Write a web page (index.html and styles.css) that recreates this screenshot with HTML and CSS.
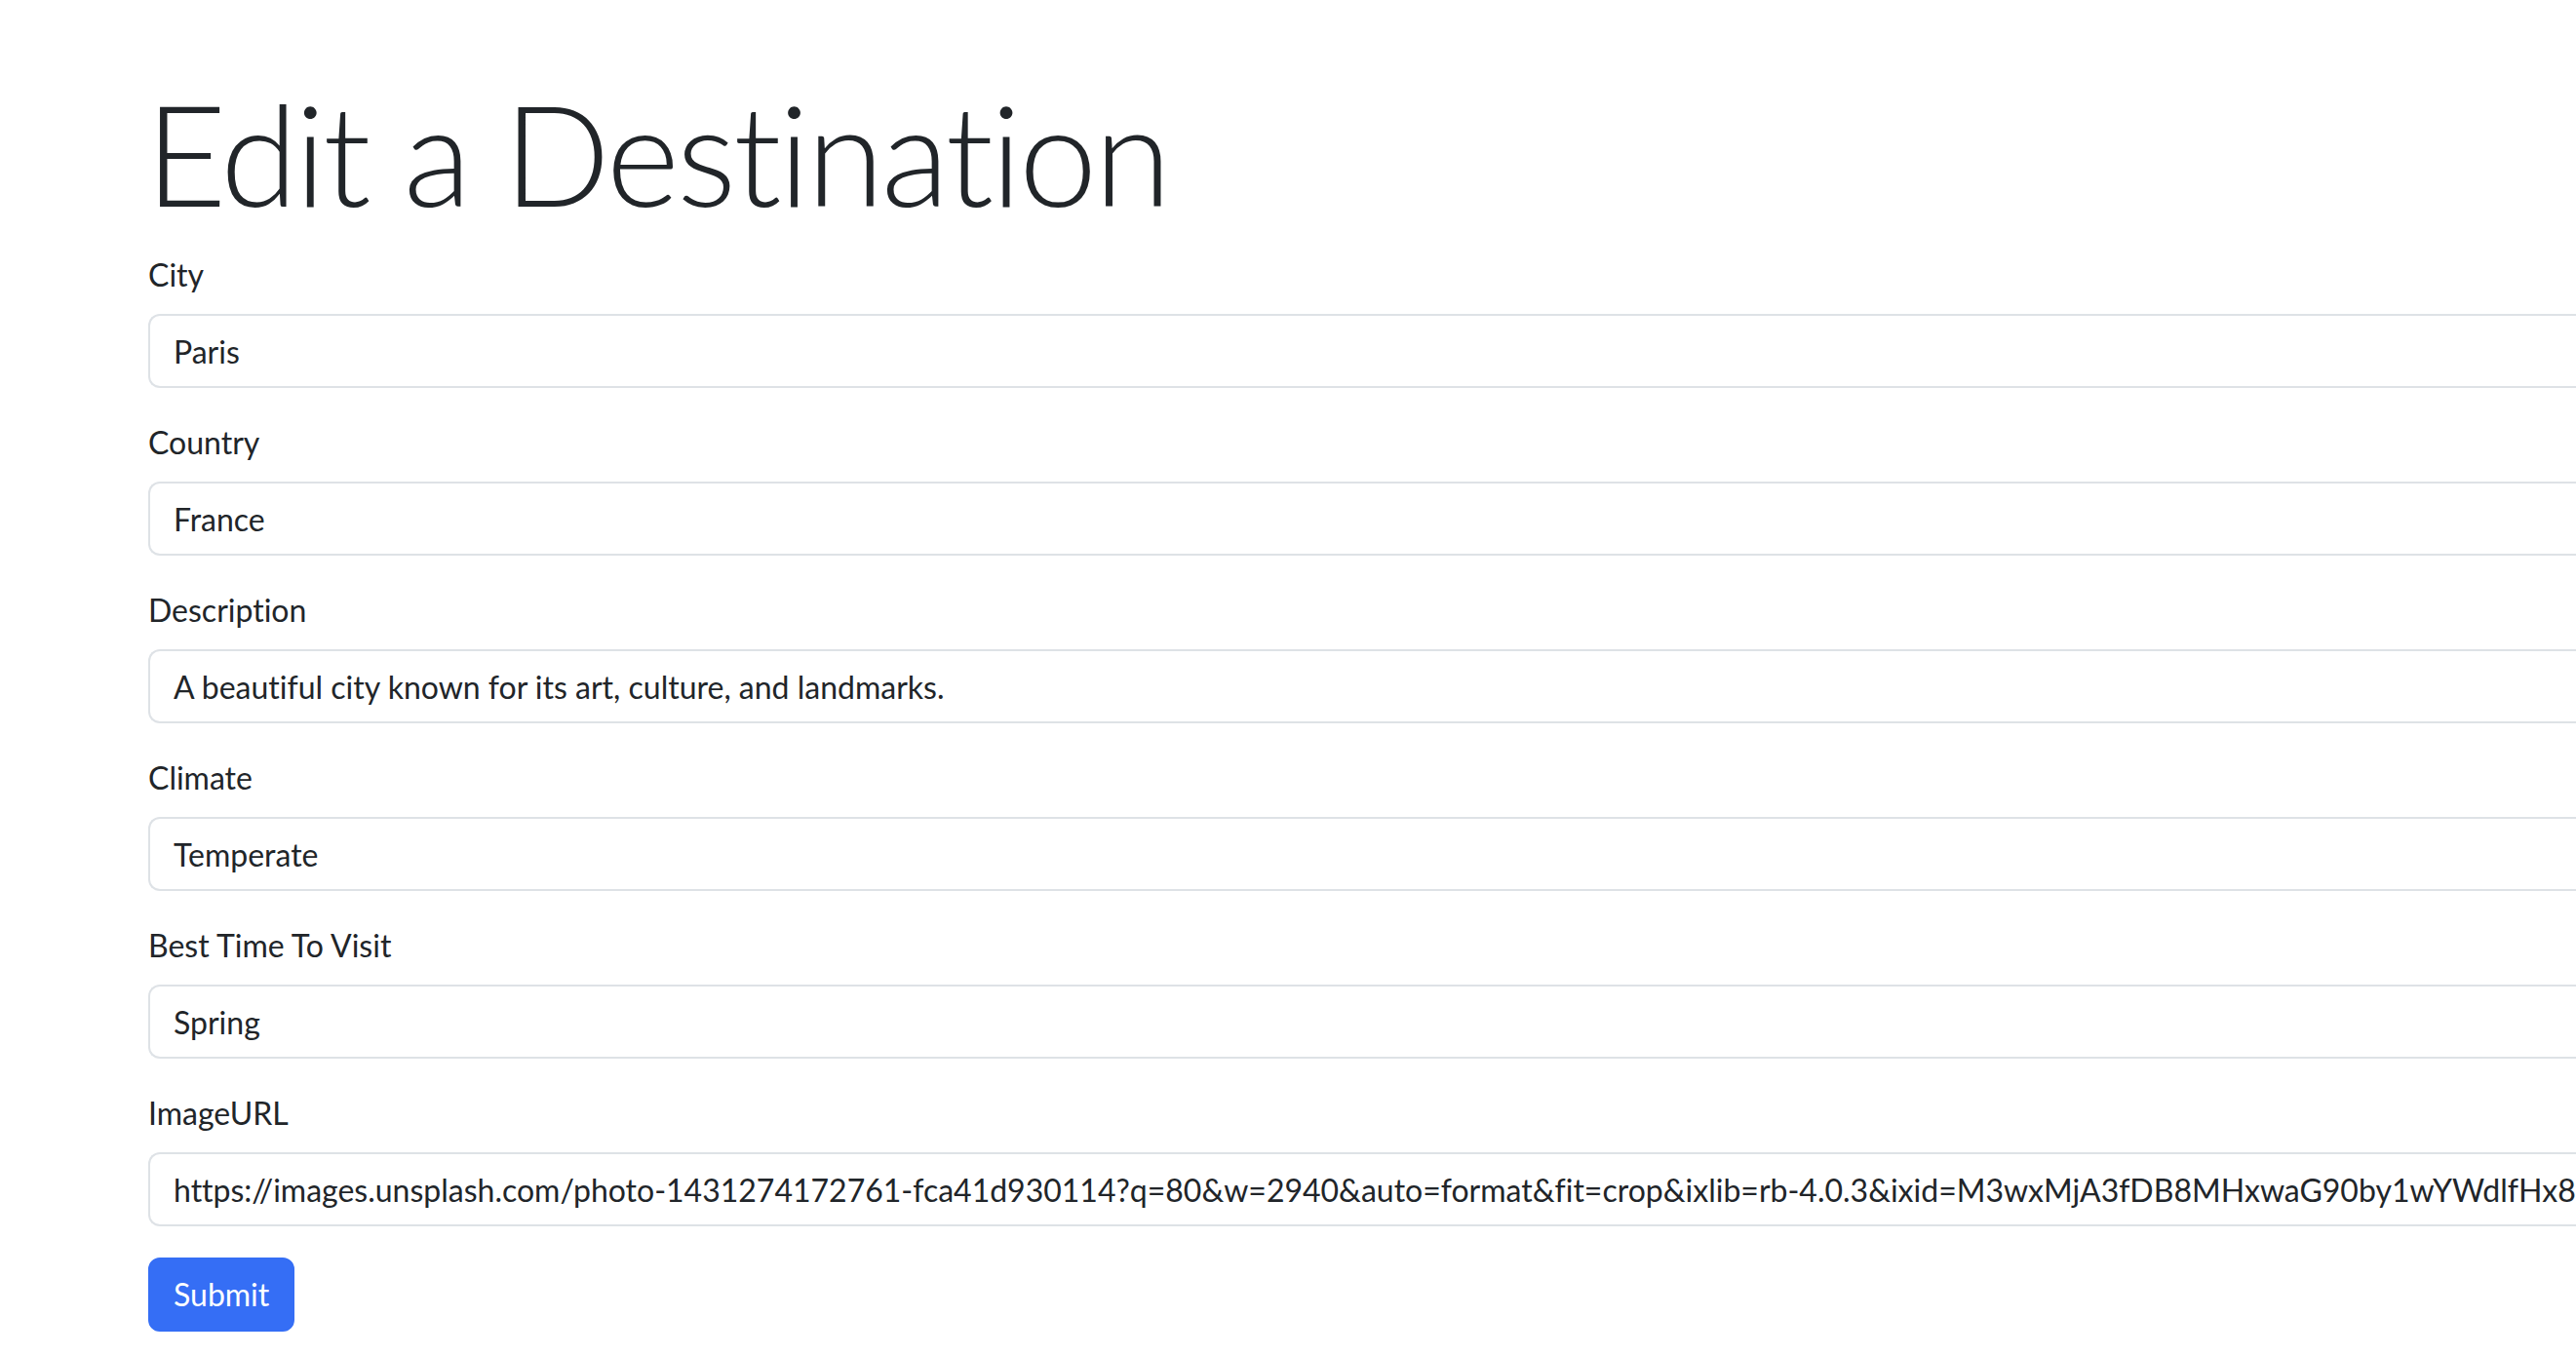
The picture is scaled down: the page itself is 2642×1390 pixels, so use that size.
FILE: index.html
```html
<!DOCTYPE html>
<html lang="en">
<head>
<meta charset="utf-8">
<title>Edit a Destination</title>
<link rel="stylesheet" href="styles.css">
</head>
<body>
<main class="page">
  <h1 class="title">Edit a Destination</h1>
  <form class="form">
    <div class="group">
      <label class="label" for="city">City</label>
      <input class="control" id="city" type="text" value="Paris">
    </div>
    <div class="group">
      <label class="label" for="country">Country</label>
      <input class="control" id="country" type="text" value="France">
    </div>
    <div class="group">
      <label class="label" for="description">Description</label>
      <input class="control" id="description" type="text" value="A beautiful city known for its art, culture, and landmarks.">
    </div>
    <div class="group">
      <label class="label" for="climate">Climate</label>
      <input class="control" id="climate" type="text" value="Temperate">
    </div>
    <div class="group">
      <label class="label" for="besttime">Best Time To Visit</label>
      <input class="control" id="besttime" type="text" value="Spring">
    </div>
    <div class="group">
      <label class="label" for="imageurl">ImageURL</label>
      <input class="control" id="imageurl" type="text" value="https://images.unsplash.com/photo-1431274172761-fca41d930114?q=80&amp;w=2940&amp;auto=format&amp;fit=crop&amp;ixlib=rb-4.0.3&amp;ixid=M3wxMjA3fDB8MHxwaG90by1wYWdlfHx8fGVufDB8fHx8fA%3D%3D">
    </div>
    <button class="submit" type="submit">Submit</button>
  </form>
</main>
</body>
</html>
```
FILE: styles.css
```css
html, body {
  margin: 0;
  padding: 0;
  overflow: hidden;
  background: #ffffff;
}

body {
  font-family: Lato, "Liberation Sans", sans-serif;
  font-size: 32px;
  line-height: 48px;
  color: #212529;
  font-variant-ligatures: none;
}

.page {
  padding: 71px 0 0 152px;
}

.title {
  margin: 0 0 15px -3px;
  font-size: 144px;
  line-height: 172px;
  font-weight: 300;
  letter-spacing: -3px;
  color: #212529;
}

.form {
  margin: 0;
}

.group {
  margin-bottom: 32px;
}

.label {
  display: block;
  margin-bottom: 16px;
  font-size: 32px;
  line-height: 48px;
}

.control {
  display: block;
  box-sizing: border-box;
  width: 100%;
  height: 76px;
  margin: 0;
  padding: 12px 0 12px 24px;
  font-family: Lato, "Liberation Sans", sans-serif;
  font-size: 32px;
  line-height: 48px;
  font-variant-ligatures: none;
  color: #212529;
  background: #ffffff;
  border: 2px solid #dee2e6;
  border-right: none;
  border-radius: 12px 0 0 12px;
  outline: none;
}

.submit {
  display: inline-block;
  box-sizing: border-box;
  height: 76px;
  margin: 0;
  padding: 12px 24px;
  font-family: Lato, "Liberation Sans", sans-serif;
  font-size: 32px;
  line-height: 48px;
  color: #ffffff;
  background: #356ef5;
  border: 2px solid #356ef5;
  border-radius: 12px;
  cursor: pointer;
}
```
